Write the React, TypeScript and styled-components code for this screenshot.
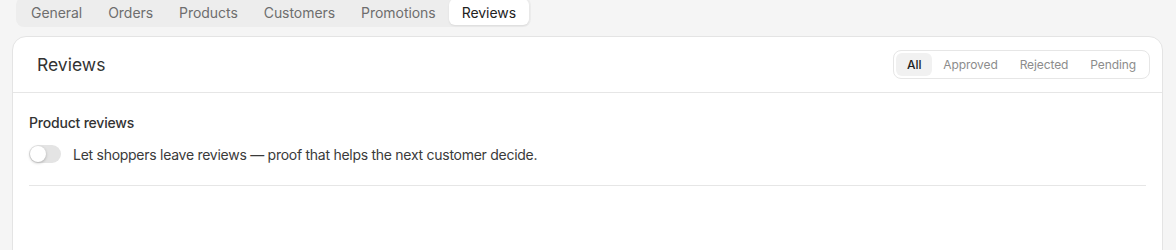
import React, { useState } from "react";
import styled, { createGlobalStyle } from "styled-components";

const Global = createGlobalStyle`
  html, body { margin: 0; padding: 0; background: #f5f5f5; }
  body { font-family: Inter, "Noto Sans", sans-serif; color: #2a2a2a; -webkit-font-smoothing: antialiased; }
  * { box-sizing: border-box; }
`;

const Page = styled.div`
  padding: 0 13px 0 12px;
  display: flex;
  flex-direction: column;
  gap: 9px;
  height: 250px;
  overflow: hidden;
`;

const TabList = styled.div`
  margin-top: -3px;
  margin-left: 4px;
  align-self: flex-start;
  display: flex;
  padding: 2px;
  background: #ededed;
  border-radius: 8px;
`;

const Tab = styled.button<{ $active?: boolean }>`
  border: 0;
  font-family: inherit;
  font-size: 14px;
  letter-spacing: -0.05px;
  height: 26px;
  padding: 0 13px;
  border-radius: 6px;
  cursor: pointer;
  color: ${(p) => (p.$active ? "#222" : "#6e6e6e")};
  background: ${(p) => (p.$active ? "#fff" : "transparent")};
  box-shadow: ${(p) => (p.$active ? "0 1px 2px rgba(0,0,0,0.08)" : "none")};
`;

const Card = styled.section`
  background: #fff;
  border: 1px solid #e4e4e4;
  border-radius: 14px;
  flex: none;
  min-height: 260px;
`;

const CardHeader = styled.header`
  height: 56px;
  display: flex;
  align-items: center;
  justify-content: space-between;
  padding: 0 12px 0 24px;
  border-bottom: 1px solid #e6e6e6;
`;

const Title = styled.h2`
  margin: 0;
  font-size: 17.5px;
  font-weight: 400;
  color: #333;
`;

const Segmented = styled.div`
  display: flex;
  padding: 2px;
  border: 1px solid #e6e6e6;
  border-radius: 8px;
`;

const Segment = styled.button<{ $active?: boolean }>`
  border: 0;
  font-family: inherit;
  font-size: 12px;
  letter-spacing: -0.1px;
  height: 23px;
  padding: 0 11px;
  border-radius: 6px;
  cursor: pointer;
  color: ${(p) => (p.$active ? "#222" : "#8c8c8c")};
  font-weight: ${(p) => (p.$active ? 500 : 400)};
  background: ${(p) => (p.$active ? "#f1f1f1" : "transparent")};
`;

const Body = styled.div`
  padding: 21px 16px 0 16px;
`;

const Section = styled.div`
  display: flex;
  flex-direction: column;
  gap: 14px;
  padding-bottom: 22px;
  border-bottom: 1px solid #e6e6e6;
`;

const SectionTitle = styled.h3`
  margin: 0;
  font-size: 14px;
  font-weight: 500;
  letter-spacing: -0.2px;
  color: #333;
`;

const Row = styled.label`
  display: flex;
  align-items: center;
  gap: 12px;
  font-size: 14px;
  letter-spacing: -0.27px;
  color: #3a3a3a;
  cursor: pointer;
`;

const Switch = styled.span<{ $on?: boolean }>`
  position: relative;
  width: 32px;
  height: 18px;
  border-radius: 9px;
  background: ${(p) => (p.$on ? "#222" : "#e4e4e4")};
  flex: none;
  &::after {
    content: "";
    position: absolute;
    top: 1px;
    left: ${(p) => (p.$on ? "15px" : "1px")};
    width: 16px;
    height: 16px;
    border-radius: 50%;
    background: #fff;
    box-shadow: 0 1px 3px rgba(0,0,0,0.25);
  }
`;

const tabs = ["General", "Orders", "Products", "Customers", "Promotions", "Reviews"];
const filters = ["All", "Approved", "Rejected", "Pending"];

export default function App() {
  const [tab, setTab] = useState("Reviews");
  const [filter, setFilter] = useState("All");
  const [on, setOn] = useState(false);
  return (
    <>
      <Global />
      <Page>
        <TabList>
          {tabs.map((t) => (
            <Tab key={t} $active={t === tab} onClick={() => setTab(t)}>
              {t}
            </Tab>
          ))}
        </TabList>
        <Card>
          <CardHeader>
            <Title>Reviews</Title>
            <Segmented>
              {filters.map((f) => (
                <Segment key={f} $active={f === filter} onClick={() => setFilter(f)}>
                  {f}
                </Segment>
              ))}
            </Segmented>
          </CardHeader>
          <Body>
            <Section>
              <SectionTitle>Product reviews</SectionTitle>
              <Row onClick={() => setOn(!on)}>
                <Switch $on={on} />
                Let shoppers leave reviews — proof that helps the next customer decide.
              </Row>
            </Section>
          </Body>
        </Card>
      </Page>
    </>
  );
}
